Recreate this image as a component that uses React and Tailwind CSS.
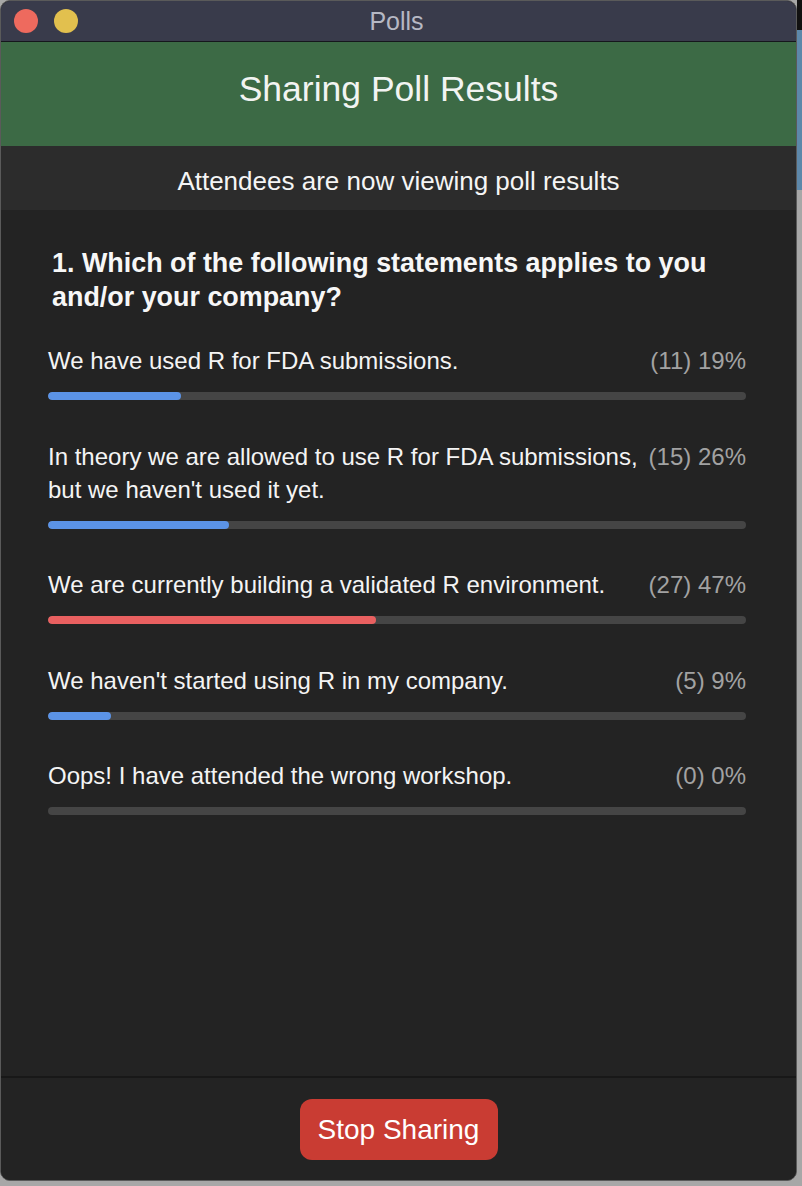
import React from "react";

const data = [
  { lines: ["We have used R for FDA submissions."], count: 11, pct: 19, color: "bg-[#5b93e6]" },
  { lines: ["In theory we are allowed to use R for FDA submissions,", "but we haven't used it yet."], count: 15, pct: 26, color: "bg-[#5b93e6]" },
  { lines: ["We are currently building a validated R environment."], count: 27, pct: 47, color: "bg-[#e96060]" },
  { lines: ["We haven't started using R in my company."], count: 5, pct: 9, color: "bg-[#5b93e6]" },
  { lines: ["Oops! I have attended the wrong workshop."], count: 0, pct: 0, color: "bg-[#5b93e6]" },
];

export default function App() {
  return (
    <div
      className="w-[802px] h-[1186px] bg-[#a7a7a7] flex"
      style={{ fontFamily: '"Liberation Sans", Arial, sans-serif' }}
    >
      <div className="w-[797px] h-[1181px] flex flex-col rounded-[10px] overflow-hidden border border-[#5a5a5a] bg-[#232323]">
        {/* title bar */}
        <div className="h-[41px] shrink-0 bg-[#393b4b] border-b border-[#15161c] grid grid-cols-[1fr_auto_1fr] items-center">
          <div className="flex items-center gap-[16px] pl-[13px]">
            <span className="w-[24px] h-[24px] rounded-full bg-[#ee6a5e]" />
            <span className="w-[24px] h-[24px] rounded-full bg-[#e2c04e]" />
          </div>
          <div className="text-[25px] text-[#b6b8c4] leading-none pr-[4px]">Polls</div>
          <div />
        </div>
        {/* green header */}
        <div className="h-[104px] shrink-0 bg-[#3c6a45] flex items-center justify-center pb-[9px]">
          <span className="text-[35.5px] text-[#f2f4f2] leading-none">Sharing Poll Results</span>
        </div>
        {/* subheader */}
        <div className="h-[64px] shrink-0 bg-[#2c2c2c] flex items-center justify-center pt-[6px]">
          <span className="text-[26px] text-[#f5f5f5] leading-none">Attendees are now viewing poll results</span>
        </div>
        {/* main */}
        <div className="flex-1 bg-[#232323] pl-[47px] pr-[50px] pt-[36px]">
          <div className="pl-[4px] text-[26.9px] font-bold leading-[34px] text-[#f7f7f7]">
            1. Which of the following statements applies to you<br />and/or your company?
          </div>
          <div className="mt-[30px] flex flex-col gap-[39.5px]">
            {data.map((d, i) => (
              <div key={i} className="flex flex-col">
                <div className="flex justify-between items-start text-[24px] leading-[33px]">
                  <div className="text-[#f4f4f4]">
                    {d.lines.map((l, j) => (
                      <div key={j}>{l}</div>
                    ))}
                  </div>
                  <div className="text-[#a2a2a2] whitespace-nowrap">({d.count}) {d.pct}%</div>
                </div>
                <div className="mt-[15px] h-[8px] rounded-full bg-[#454545] overflow-hidden">
                  <div className={`h-full rounded-full ${d.color}`} style={{ width: `${d.pct}%` }} />
                </div>
              </div>
            ))}
          </div>
        </div>
        {/* footer */}
        <div className="h-[104px] shrink-0 border-t-2 border-[#181818] bg-[#232323] flex justify-center pt-[21px]">
          <button className="w-[198px] h-[61px] rounded-[12px] bg-[#c93c33] text-white text-[28px] leading-none">
            Stop Sharing
          </button>
        </div>
      </div>
      <div className="flex-1 flex flex-col">
        <div className="h-[30px] bg-[#111]" />
        <div className="h-[160px] bg-[#5d88aa]" />
        <div className="flex-1 bg-[#a7a7a7]" />
      </div>
    </div>
  );
}
